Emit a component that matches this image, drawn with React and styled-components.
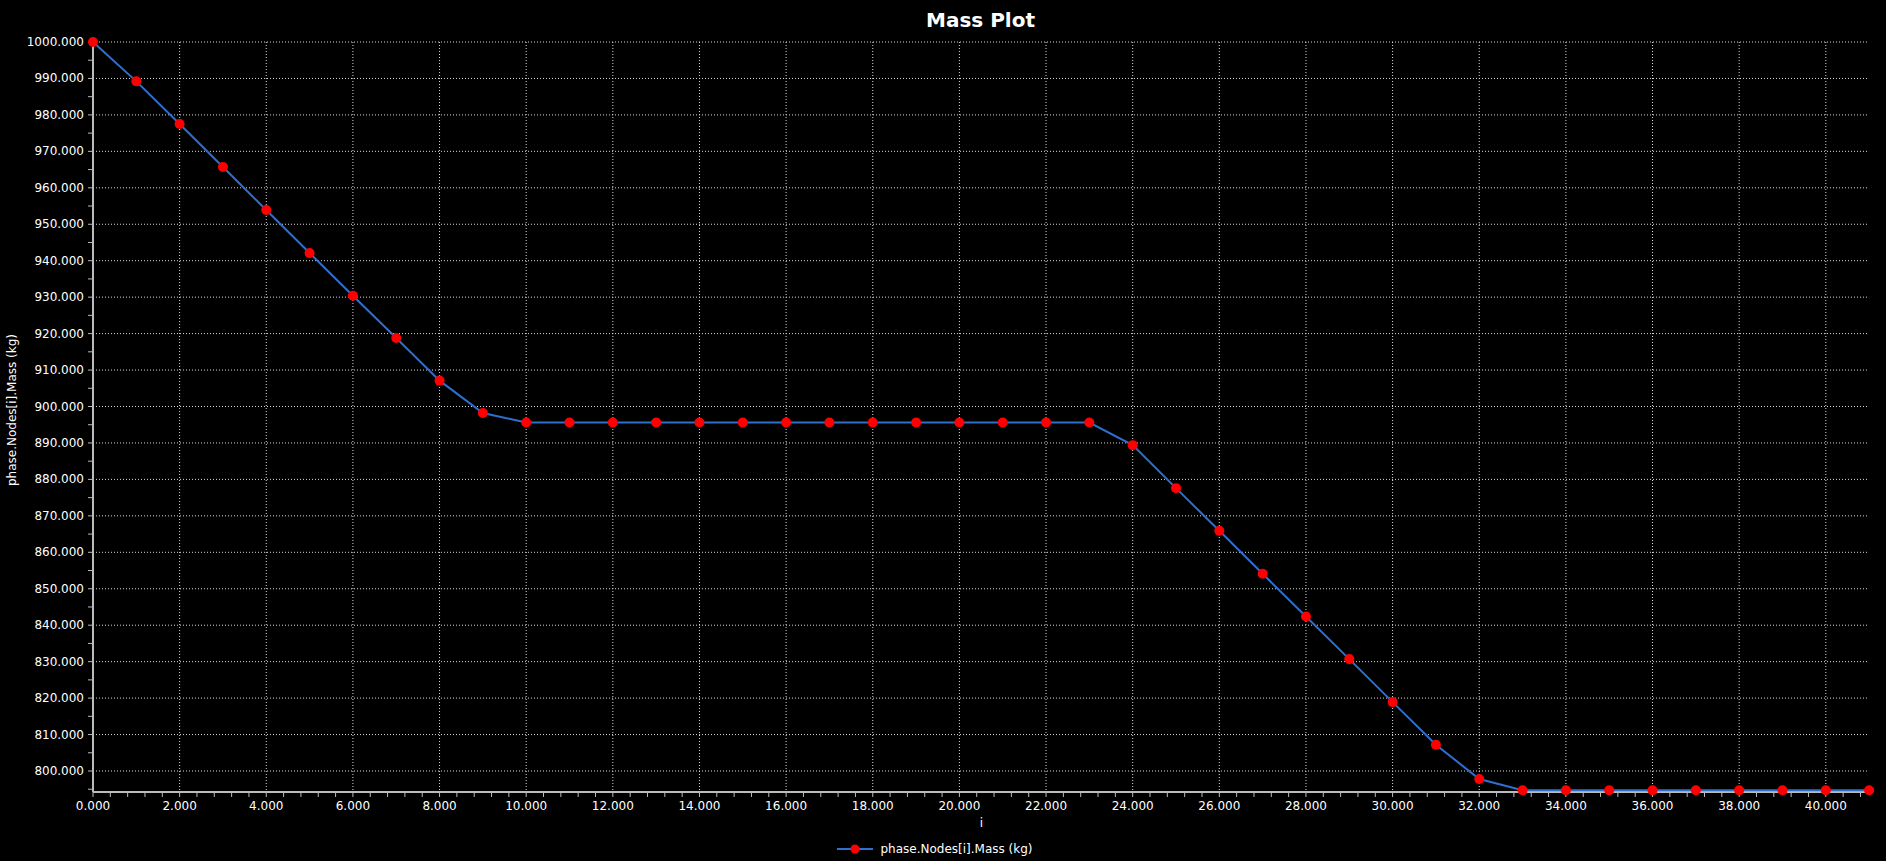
import React from "react";
import styled, { createGlobalStyle } from "styled-components";

const Global = createGlobalStyle`
  html, body { margin: 0; padding: 0; background: #000; }
  body { font-family: "DejaVu Sans", Verdana, sans-serif; color: #fff; }
`;

const Page = styled.div`
  width: 1886px; height: 861px; background: #000;
  display: flex; flex-direction: column; overflow: hidden;
`;
const Title = styled.div`
  height: 40px; display: flex; align-items: center; justify-content: center;
  padding-left: 75px; font-weight: bold; font-size: 20px; box-sizing: border-box;
`;
const Chart = styled.svg`
  display: block; overflow: visible;
`;
const AxisTitle = styled.div`
  height: 22px; display: flex; align-items: center; justify-content: center;
  padding-left: 77px; font-size: 12px; margin-top: 2px;
`;
const Legend = styled.div`
  display: flex; align-items: center; justify-content: center; gap: 7px;
  padding-right: 16px; font-size: 12px; height: 22px; margin-top: 4px;
`;
const LegendMark = styled.svg`display: block;`;

const values = [1000, 989.2, 977.5, 965.7, 953.9, 942.1, 930.4, 918.8, 907.1, 898.2];
for (let i = 10; i <= 23; i++) values.push(895.6);
values.push(889.4, 877.6, 865.9, 854.1, 842.4, 830.7, 818.9, 807.2, 797.8);
for (let i = 33; i <= 41; i++) values.push(794.7);

const L = 93, R = 1868, T = 2, B = 752;
const X0 = 93, DX = 43.32;
const Y1000 = 2, DY = 3.645;
const sx = (i) => X0 + i * DX;
const sy = (v) => Y1000 + (1000 - v) * DY;

export default function App() {
  const grid = [];
  for (let v = 800; v <= 1000; v += 10) grid.push(<line key={"h" + v} x1={L} x2={R - 1} y1={sy(v)} y2={sy(v)} stroke="#d8d8d8" strokeDasharray="1 2" />);
  for (let i = 2; i <= 40; i += 2) grid.push(<line key={"v" + i} x1={sx(i)} x2={sx(i)} y1={T} y2={B} stroke="#d8d8d8" strokeDasharray="1 2" />);
  const ticks = [];
  for (let v = 795; v <= 1000; v += 5) ticks.push(<line key={"yt" + v} x1={L - 5} x2={L} y1={sy(v)} y2={sy(v)} stroke="#bbb" />);
  for (let k = 0; k * 0.4 <= 41; k++) ticks.push(<line key={"xt" + k} x1={sx(k * 0.4)} x2={sx(k * 0.4)} y1={B} y2={B + 5} stroke="#bbb" />);
  const ylabels = [];
  for (let v = 800; v <= 1000; v += 10) ylabels.push(<text key={"yl" + v} x={L - 9} y={sy(v) + 4} textAnchor="end" fontSize="12" fill="#fff">{v.toFixed(3)}</text>);
  const xlabels = [];
  for (let i = 0; i <= 40; i += 2) xlabels.push(<text key={"xl" + i} x={sx(i)} y={B + 18} textAnchor="middle" fontSize="12" fill="#fff">{i.toFixed(3)}</text>);
  const pts = values.map((v, i) => `${sx(i)},${sy(v)}`).join(" ");
  return (
    <Page>
      <Global />
      <Title>Mass Plot</Title>
      <Chart width="1886" height="770" fontFamily="DejaVu Sans, sans-serif">
        {grid}
        <line x1={L} x2={L} y1={T - 2} y2={B} stroke="#bbb" strokeWidth="2" />
        <line x1={L} x2={R} y1={B} y2={B} stroke="#bbb" strokeWidth="2" />
        {ticks}
        {ylabels}
        {xlabels}
        <text transform="translate(16 370) rotate(-90)" textAnchor="middle" fontSize="12" fill="#fff">phase.Nodes[i].Mass (kg)</text>
        <polyline points={pts} fill="none" stroke="#2f6fd0" strokeWidth="2" />
        {values.map((v, i) => <circle key={i} cx={sx(i)} cy={sy(v)} r="5" fill="#ff0000" />)}
      </Chart>
      <AxisTitle>i</AxisTitle>
      <Legend>
        <LegendMark width="36" height="12"><line x1="0" x2="36" y1="6" y2="6" stroke="#2f6fd0" strokeWidth="2" /><circle cx="18" cy="6" r="4.5" fill="#f00" /></LegendMark>
        <span>phase.Nodes[i].Mass (kg)</span>
      </Legend>
    </Page>
  );
}
